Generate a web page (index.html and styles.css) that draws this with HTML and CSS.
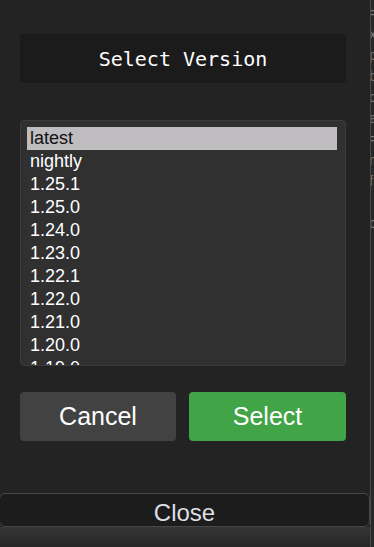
FILE: index.html
```html
<!DOCTYPE html>
<html lang="en">
<head>
  <meta charset="UTF-8" />
  <meta name="viewport" content="width=device-width, initial-scale=1.0" />
  <title>Select Version</title>
  <link rel="stylesheet" href="styles.css">
</head>
<body>
  <div class="layout">
    <main class="panel">
      <h1 class="title">Select Version</h1>

      <ul class="versions">
        <li class="selected">latest</li>
        <li>nightly</li>
        <li>1.25.1</li>
        <li>1.25.0</li>
        <li>1.24.0</li>
        <li>1.23.0</li>
        <li>1.22.1</li>
        <li>1.22.0</li>
        <li>1.21.0</li>
        <li>1.20.0</li>
        <li>1.19.0</li>
        <li>1.18.0</li>
      </ul>

      <div class="actions">
        <button class="btn btn-cancel">Cancel</button>
        <button class="btn btn-select">Select</button>
      </div>

      <button class="close-bar">Close</button>
      <div class="shade"></div>
    </main>

    <aside class="side">
      <p>=</p>
      <p>x</p>
      <p>p</p>
      <p>b</p>
      <p>c</p>
      <p>a</p>
      <p>=</p>
      <p>r</p>
      <p>f</p>
      <p>&nbsp;</p>
      <p>c</p>
    </aside>
  </div>
</body>
</html>
```

FILE: styles.css
```css
* {
  box-sizing: border-box;
  margin: 0;
  padding: 0;
}
body {
  background: #232323;
  font-family: 'Liberation Sans', Arial, sans-serif;
  color: #fff;
  overflow: hidden;
}
.layout {
  display: flex;
  height: 547px;
}
.panel {
  width: 370px;
  flex-shrink: 0;
  padding: 34px 24px 0 20px;
  display: flex;
  flex-direction: column;
}
.title {
  height: 49px;
  background: #1b1b1b;
  border-radius: 4px;
  font-family: 'DejaVu Sans Mono', monospace;
  font-weight: normal;
  font-size: 20px;
  display: flex;
  align-items: center;
  justify-content: center;
}
.versions {
  list-style: none;
  margin-top: 37px;
  height: 246px;
  overflow: hidden;
  background: #313031;
  border: 1px solid #3b3b3b;
  border-radius: 4px;
  padding: 6px 8px 0 6px;
}
.versions li {
  height: 23px;
  line-height: 23px;
  font-size: 18px;
  padding-left: 3px;
  color: #fff;
}
.versions li.selected {
  background: #bfbdbf;
  color: #111;
}
.actions {
  display: grid;
  grid-template-columns: 156px 157px;
  gap: 13px;
  margin-top: 26px;
}
.btn {
  height: 49px;
  border: none;
  border-radius: 4px;
  font-family: inherit;
  font-size: 25px;
  color: #fff;
  cursor: pointer;
}
.btn-cancel {
  background: #424242;
}
.btn-select {
  background: #41a447;
}
.close-bar {
  margin: 52px -24px 0 -21px;
  height: 34px;
  background: #1c1c1c;
  border: 1px solid #474747;
  border-radius: 6px;
  font-family: inherit;
  font-size: 24px;
  line-height: 34px;
  padding-top: 2px;
  color: #dcdfe6;
  cursor: pointer;
}
.shade {
  margin: 0 -24px 0 -20px;
  flex: 1;
  background: linear-gradient(#353535, #262626);
}
.side {
  flex: 1;
  border-left: 1px solid #4a4a4a;
  background: #282828;
  overflow: hidden;
  font-size: 15px;
  line-height: 21px;
  color: #777;
  padding-top: 2px;
  text-indent: -2px;
}
```
